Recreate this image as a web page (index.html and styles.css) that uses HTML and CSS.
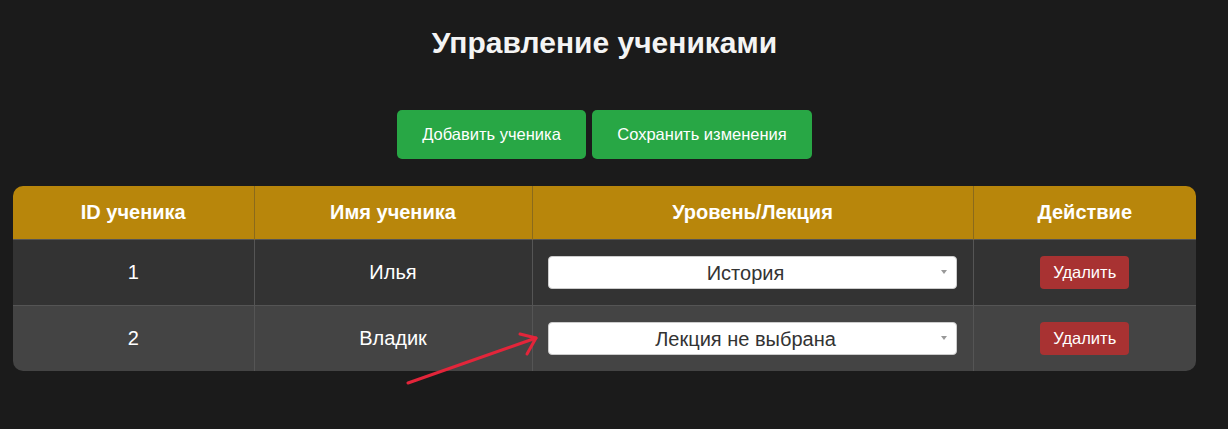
FILE: index.html
```html
<!DOCTYPE html>
<html lang="ru">
<head>
<meta charset="utf-8">
<title>Управление учениками</title>
<link rel="stylesheet" href="styles.css">
</head>
<body>
<div class="page">
  <h1 class="title">Управление учениками</h1>
  <div class="actions">
    <button class="btn btn-green btn-add">Добавить ученика</button>
    <button class="btn btn-green btn-save">Сохранить изменения</button>
  </div>
  <div class="table-wrap">
    <table class="students">
      <colgroup>
        <col class="c1"><col class="c2"><col class="c3"><col class="c4">
      </colgroup>
      <thead>
        <tr><th>ID ученика</th><th>Имя ученика</th><th>Уровень/Лекция</th><th>Действие</th></tr>
      </thead>
      <tbody>
        <tr class="odd">
          <td>1</td><td>Илья</td>
          <td><div class="select-wrap"><select class="lecture"><option>История</option></select></div></td>
          <td><button class="btn btn-del">Удалить</button></td>
        </tr>
        <tr class="even">
          <td>2</td><td>Владик</td>
          <td><div class="select-wrap"><select class="lecture"><option>Лекция не выбрана</option></select></div></td>
          <td><button class="btn btn-del">Удалить</button></td>
        </tr>
      </tbody>
    </table>
  </div>
  <svg class="annot" width="1228" height="429" viewBox="0 0 1228 429">
    <g fill="none" stroke="#e3253a" stroke-width="3" stroke-linecap="round" stroke-linejoin="round">
      <path d="M408 383 L536 338"/>
      <path d="M520 334 L536 338 L527 354"/>
    </g>
  </svg>
</div>
</body>
</html>
```

FILE: styles.css
```css
html, body {
  margin: 0;
  padding: 0;
  background: #1b1b1b;
}
body {
  font-family: "Liberation Sans", Arial, sans-serif;
  color: #fff;
}
.page {
  position: relative;
  width: 1210px;
  height: 429px;
  padding: 0 14px 0 13px;
  box-sizing: border-box;
}
.title {
  margin: 0;
  padding-top: 25px;
  height: 110px;
  box-sizing: border-box;
  text-align: center;
  font-size: 30px;
  font-weight: bold;
  color: #f4f4f4;
  line-height: 36px;
}
.actions {
  display: flex;
  justify-content: center;
  gap: 6px;
  margin-bottom: 27px;
}
.btn {
  font-family: "Liberation Sans", Arial, sans-serif;
  border: none;
  color: #fff;
  cursor: pointer;
}
.btn-green {
  background: #28a745;
  height: 49px;
  border-radius: 5px;
  font-size: 16.5px;
  padding: 0 20px;
}
.btn-add { width: 189px; }
.btn-save { width: 220px; }
.table-wrap {
  border-radius: 10px;
  overflow: hidden;
  width: 1183px;
}
.students {
  width: 1183px;
  table-layout: fixed;
  border-collapse: collapse;
}
.c1 { width: 241px; }
.c2 { width: 278px; }
.c3 { width: 441px; }
.c4 { width: 223px; }
.students th {
  background: #b8860b;
  height: 53px;
  font-size: 20px;
  font-weight: bold;
  color: #fff;
  border-left: 1px solid #8a6a1c;
  padding: 0;
}
.students td {
  height: 65px;
  text-align: center;
  font-size: 20px;
  border-left: 1px solid #555;
  border-top: 1px solid #555;
  padding: 0;
}
.students th:first-child, .students td:first-child { border-left: none; }
.odd td { background: #333; }
.even td { background: #444; }
.select-wrap {
  position: relative;
  width: 409px;
  margin: 0 auto;
}
.select-wrap::after {
  content: "";
  position: absolute;
  right: 10px;
  top: 14px;
  border-left: 3.5px solid transparent;
  border-right: 3.5px solid transparent;
  border-top: 4px solid #999;
}
.lecture {
  -webkit-appearance: none;
  appearance: none;
  display: block;
  width: 409px;
  height: 33px;
  background: #fff;
  border: 1px solid #ccc;
  border-radius: 4px;
  font-family: "Liberation Sans", Arial, sans-serif;
  font-size: 20px;
  color: #333;
  text-align: center;
  text-align-last: center;
  padding: 0 34px 0 20px;
}
.btn-del {
  background: #a83232;
  width: 89px;
  height: 33px;
  border-radius: 4px;
  font-size: 16.5px;
  padding: 0;
}
.annot {
  position: absolute;
  left: 0;
  top: 0;
  pointer-events: none;
}
```
